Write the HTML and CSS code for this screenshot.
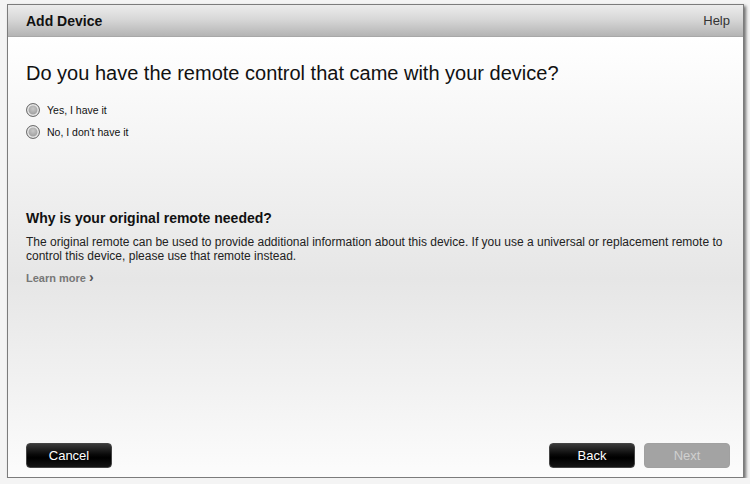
FILE: index.html
```html
<!DOCTYPE html>
<html>
<head>
<meta charset="utf-8">
<link rel="stylesheet" href="styles.css">
</head>
<body>
<div class="window">
  <div class="header">
    <span class="title">Add Device</span>
    <span class="help">Help</span>
  </div>
  <div class="content">
    <h1 class="question">Do you have the remote control that came with your device?</h1>
    <div class="options">
      <label class="option"><span class="radio"></span>Yes, I have it</label>
      <label class="option"><span class="radio"></span>No, I don't have it</label>
    </div>
    <h2 class="why">Why is your original remote needed?</h2>
    <p class="desc">The original remote can be used to provide additional information about this device. If you use a universal or replacement remote to control this device, please use that remote instead.</p>
    <div class="learn">Learn more <span class="chev">&#8250;</span></div>
    <div class="footer">
      <button class="btn">Cancel</button>
      <div class="right">
        <button class="btn">Back</button>
        <button class="btn disabled">Next</button>
      </div>
    </div>
  </div>
</div>
</body>
</html>
```
FILE: styles.css
```css
html, body {
  margin: 0;
  padding: 0;
  background: #f4f4f4;
  font-family: "Liberation Sans", Arial, sans-serif;
}
.window {
  margin: 4px 6px 0 7px;
  height: 474px;
  border: 1px solid #7c7c7c;
  box-shadow: 2px 2px 3px rgba(0,0,0,0.55);
  display: flex;
  flex-direction: column;
  box-sizing: border-box;
}
.header {
  height: 31px;
  flex: none;
  background: linear-gradient(#ececec, #d8d8d8 45%, #b4b4b4);
  display: flex;
  align-items: center;
  justify-content: space-between;
  padding: 0 13px 0 18px;
  border-bottom: 1px solid #a8a8a8;
}
.title {
  font-weight: bold;
  font-size: 14px;
  color: #111;
}
.help {
  font-size: 13px;
  color: #333;
}
.content {
  flex: 1;
  background: linear-gradient(#ffffff, #f4f4f4 25%, #e6e6e6 55%, #f2f2f2 80%, #fcfcfc);
  padding: 0 13px 0 18px;
  display: flex;
  flex-direction: column;
}
.question {
  font-weight: normal;
  font-size: 20px;
  color: #111;
  margin: 25px 0 18px;
}
.options {
  display: flex;
  flex-direction: column;
  gap: 8px;
}
.option {
  display: flex;
  align-items: center;
  font-size: 10.5px;
  color: #111;
  height: 14px;
}
.radio {
  width: 12px;
  height: 12px;
  border-radius: 50%;
  border: 1px solid #6e6e6e;
  background: radial-gradient(circle at 50% 40%, #c8c8c8, #a0a0a0 60%, #8a8a8a);
  box-shadow: inset 0 0 0 1.5px #e8e8e8;
  margin-right: 7px;
}
.why {
  font-size: 14px;
  font-weight: bold;
  color: #111;
  margin: 71px 0 9px;
}
.desc {
  font-size: 12px;
  line-height: 14px;
  color: #222;
  margin: 0;
}
.learn {
  margin-top: 6px;
  font-size: 11px;
  font-weight: bold;
  color: #777;
}
.chev {
  font-size: 14px;
  color: #555;
}
.footer {
  margin-top: auto;
  margin-bottom: 9px;
  display: flex;
  justify-content: space-between;
}
.right {
  display: flex;
  gap: 9px;
}
.btn {
  width: 86px;
  height: 25px;
  border: 1px solid #444;
  border-radius: 4px;
  background: linear-gradient(#3a3a3a, #0a0a0a 45%, #000 60%, #141414);
  color: #fff;
  font-family: "Liberation Sans", Arial, sans-serif;
  font-size: 13px;
  padding: 0;
}
.btn.disabled {
  background: #a3a3a3;
  border-color: #a0a0a0;
  color: #d0d0d0;
}
```
